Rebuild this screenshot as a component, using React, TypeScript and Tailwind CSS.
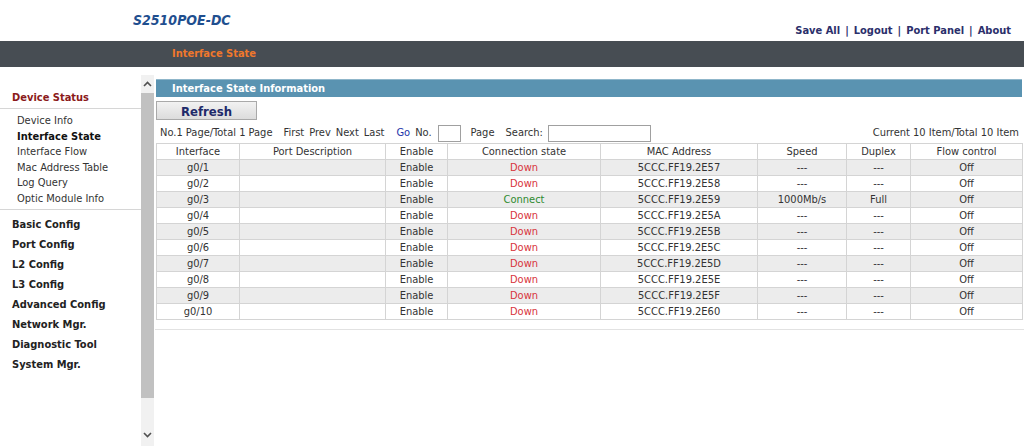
const rows = [
  { port: "g0/1", mac: "5CCC.FF19.2E57", up: false },
  { port: "g0/2", mac: "5CCC.FF19.2E58", up: false },
  { port: "g0/3", mac: "5CCC.FF19.2E59", up: true },
  { port: "g0/4", mac: "5CCC.FF19.2E5A", up: false },
  { port: "g0/5", mac: "5CCC.FF19.2E5B", up: false },
  { port: "g0/6", mac: "5CCC.FF19.2E5C", up: false },
  { port: "g0/7", mac: "5CCC.FF19.2E5D", up: false },
  { port: "g0/8", mac: "5CCC.FF19.2E5E", up: false },
  { port: "g0/9", mac: "5CCC.FF19.2E5F", up: false },
  { port: "g0/10", mac: "5CCC.FF19.2E60", up: false },
];

const statusItems = ["Device Info", "Interface State", "Interface Flow", "Mac Address Table", "Log Query", "Optic Module Info"];
const groups = ["Basic Config", "Port Config", "L2 Config", "L3 Config", "Advanced Config", "Network Mgr.", "Diagnostic Tool", "System Mgr."];

const cols = [
  { label: "Interface", w: "w-[83px]" },
  { label: "Port Description", w: "w-[146px]" },
  { label: "Enable", w: "w-[62px]" },
  { label: "Connection state", w: "w-[153px]" },
  { label: "MAC Address", w: "w-[157px]" },
  { label: "Speed", w: "w-[89px]" },
  { label: "Duplex", w: "w-[64px]" },
  { label: "Flow control", w: "w-[112px]" },
];

export default function App() {
  return (
    <div className="h-[446px] w-[1024px] overflow-hidden bg-white font-['DejaVu_Sans_Condensed','Liberation_Sans',sans-serif] text-[11px] text-[#333]">
      {/* top header */}
      <header className="flex h-[41px] items-start justify-between">
        <div className="pl-[133px] pt-[10px] text-[14px] font-bold italic text-[#1f4f8f]">S2510POE-DC</div>
        <nav className="flex gap-[5px] pr-[13px] pt-[23px] text-[11px] font-bold text-[#2b2f6b]">
          <span>Save All</span>
          <span>|</span>
          <span>Logout</span>
          <span>|</span>
          <span>Port Panel</span>
          <span>|</span>
          <span>About</span>
        </nav>
      </header>
      <div className="flex h-[26px] items-center bg-[#474d53] pl-[172px] text-[11px] font-bold text-[#f0782c]">Interface State</div>

      <div className="flex h-[379px] pt-[8px]">
        {/* left menu */}
        <aside className="flex w-[155px] shrink-0">
          <div className="w-[141px]">
            <div className="border-b border-[#d6d6d6] pb-[2px] pl-[12px] pt-[15px] text-[11px] font-bold leading-[16px] text-[#8b1a1a]">
              Device Status
            </div>
            <ul className="border-b border-[#d6d6d6] pb-[2px] pl-[17px] pt-[4px]">
              {statusItems.map((s) => (
                <li key={s} className={`leading-[15.6px] ${s === "Interface State" ? "font-bold text-[#111]" : "text-[#333]"}`}>
                  {s}
                </li>
              ))}
            </ul>
            <ul className="pl-[12px] pt-[5px]">
              {groups.map((g) => (
                <li key={g} className="leading-[20px] font-bold text-[#222]">
                  {g}
                </li>
              ))}
            </ul>
          </div>
          {/* scrollbar */}
          <div className="flex w-[13px] flex-col bg-[#f1f1f1]">
            <div className="flex h-[18px] items-center justify-center">
              <svg width="9" height="6" viewBox="0 0 9 6" fill="none" stroke="#505050" strokeWidth="1.6">
                <path d="M1 5 L4.5 1.5 L8 5" />
              </svg>
            </div>
            <div className="h-[305px] bg-[#c1c1c1]" />
            <div className="flex-1" />
            <div className="flex h-[22px] items-center justify-center">
              <svg width="9" height="6" viewBox="0 0 9 6" fill="none" stroke="#505050" strokeWidth="1.6">
                <path d="M1 1 L4.5 4.5 L8 1" />
              </svg>
            </div>
          </div>
        </aside>

        {/* main */}
        <main className="flex-1 pt-[4px]">
          <div className="border-b border-[#e2e2e2] pb-[9px]">
            <div className="mx-[1px] mr-[2px] flex h-[18px] items-center border-t border-[#8fb6ca] bg-[#5a93b1] pl-[16px] pt-[1px] font-bold text-white">
              Interface State Information
            </div>
            <div className="mt-[4px] pl-[1px]">
              <button className="h-[19px] w-[101px] border border-[#a9a9a9] bg-gradient-to-b from-[#f2f2f2] to-[#dcdcdc] pt-[1px] text-[13px] font-bold leading-none text-[#1e2a6a]">
                Refresh
              </button>
            </div>
            <div className="mt-[3px] flex h-[18px] items-center pl-[5px] pr-[5px]">
              <span>No.1 Page/Total 1 Page</span>
              <span className="ml-[11px]">First</span>
              <span className="ml-[5px]">Prev</span>
              <span className="ml-[5px]">Next</span>
              <span className="ml-[5px]">Last</span>
              <span className="ml-[12px] text-[#2233aa]">Go</span>
              <span className="ml-[5px]">No.</span>
              <span className="ml-[6px] h-[17px] w-[23px] border border-[#a0a0a0] bg-white" />
              <span className="ml-[10px]">Page</span>
              <span className="ml-[11px]">Search:</span>
              <span className="ml-[5px] h-[17px] w-[103px] border border-[#a0a0a0] bg-white" />
              <span className="ml-auto">Current 10 Item/Total 10 Item</span>
            </div>
            <table className="mt-[1px] ml-[1px] w-[866px] table-fixed border-collapse border border-[#cfcfcf]">
              <thead>
                <tr className="h-[16px] bg-white">
                  {cols.map((c) => (
                    <th key={c.label} className={`${c.w} border border-[#d4d4d4] p-0 text-center font-normal leading-[15px]`}>
                      {c.label}
                    </th>
                  ))}
                </tr>
              </thead>
              <tbody>
                {rows.map((r, i) => (
                  <tr key={r.port} className={`h-[16px] ${i % 2 === 0 ? "bg-[#ececec]" : "bg-white"}`}>
                    <td className="border border-[#d4d4d4] p-0 text-center leading-[15px]">{r.port}</td>
                    <td className="border border-[#d4d4d4] p-0" />
                    <td className="border border-[#d4d4d4] p-0 text-center leading-[15px]">Enable</td>
                    <td className={`border border-[#d4d4d4] p-0 text-center leading-[15px] ${r.up ? "text-[#2f8a2f]" : "text-[#d8343c]"}`}>
                      {r.up ? "Connect" : "Down"}
                    </td>
                    <td className="border border-[#d4d4d4] p-0 text-center leading-[15px]">{r.mac}</td>
                    <td className="border border-[#d4d4d4] p-0 text-center leading-[15px]">{r.up ? "1000Mb/s" : "---"}</td>
                    <td className="border border-[#d4d4d4] p-0 text-center leading-[15px]">{r.up ? "Full" : "---"}</td>
                    <td className="border border-[#d4d4d4] p-0 text-center leading-[15px]">Off</td>
                  </tr>
                ))}
              </tbody>
            </table>
          </div>
        </main>
      </div>
    </div>
  );
}
